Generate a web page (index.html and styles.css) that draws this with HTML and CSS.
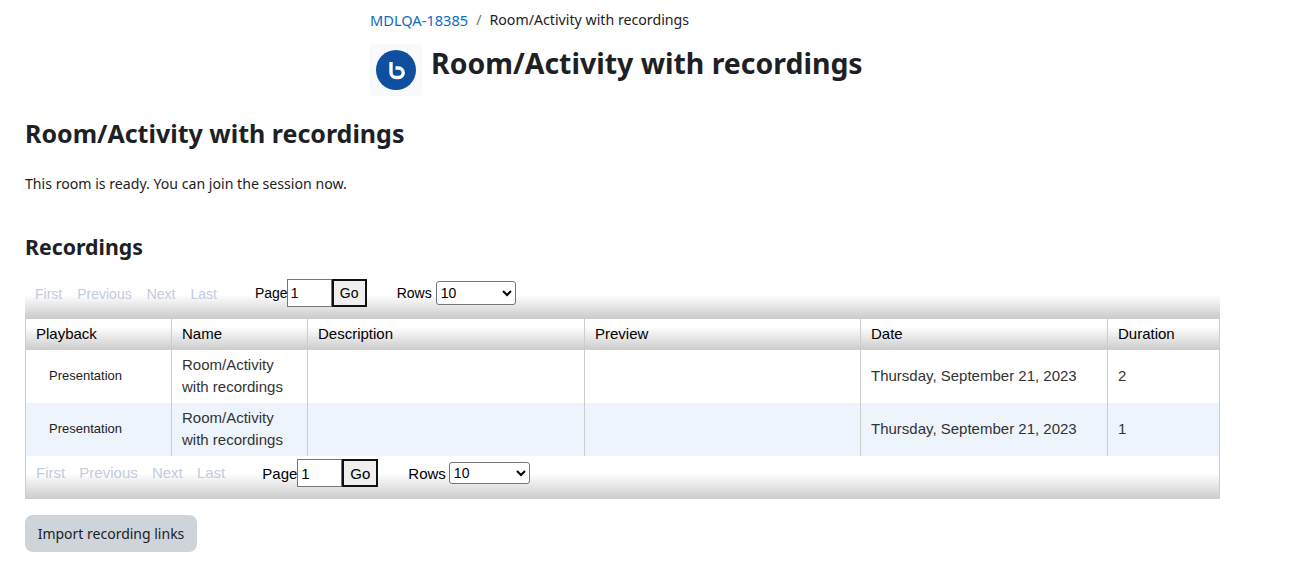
FILE: index.html
```
<!DOCTYPE html>
<html lang="en">
<head>
<meta charset="utf-8">
<title>Room/Activity with recordings</title>
<link rel="stylesheet" href="styles.css">
</head>
<body>
<header class="page-header">
  <nav class="crumbs"><a href="#">MDLQA-18385</a><span class="sep">/</span><span>Room/Activity with recordings</span></nav>
  <div class="title-row">
    <div class="icon-box">
      <svg width="40" height="40" viewBox="0 0 40 40"><circle cx="20" cy="20" r="20" fill="#0f4fa0"/><path d="M15 12V22.500A5 5 0 0 0 20 27.500H22.500A4.750 4.750 0 0 0 22.500 18H19.500" fill="none" stroke="#fff" stroke-width="3.400"/></svg>
    </div>
    <h1 class="page-title">Room/Activity with recordings</h1>
  </div>
</header>
<main class="content">
  <h2 class="room-title">Room/Activity with recordings</h2>
  <p class="status">This room is ready. You can join the session now.</p>
  <h3 class="rec-title">Recordings</h3>
  <div class="recordings">
    <div class="pager pager-top">
      <div class="pager-links"><span>First</span><span>Previous</span><span>Next</span><span>Last</span></div>
      <label class="pager-page">Page<input class="page-input" value="1"><button class="go" type="button">Go</button></label>
      <label class="pager-rows">Rows <select class="rows-select"><option>10</option></select></label>
    </div>
    <table class="rec-table">
      <colgroup><col class="c1"><col class="c2"><col class="c3"><col class="c4"><col class="c5"><col class="c6"></colgroup>
      <thead><tr><th>Playback</th><th>Name</th><th>Description</th><th>Preview</th><th>Date</th><th>Duration</th></tr></thead>
      <tbody>
        <tr><td><span class="playback">Presentation</span></td><td>Room/Activity with recordings</td><td></td><td></td><td>Thursday, September 21, 2023</td><td>2</td></tr>
        <tr class="alt"><td><span class="playback">Presentation</span></td><td>Room/Activity with recordings</td><td></td><td></td><td>Thursday, September 21, 2023</td><td>1</td></tr>
      </tbody>
    </table>
    <div class="pager pager-bottom">
      <div class="pager-links"><span>First</span><span>Previous</span><span>Next</span><span>Last</span></div>
      <label class="pager-page">Page<input class="page-input" value="1"><button class="go" type="button">Go</button></label>
      <label class="pager-rows">Rows <select class="rows-select"><option>10</option></select></label>
    </div>
  </div>
  <button class="import" type="button">Import recording links</button>
</main>
</body>
</html>
```
FILE: styles.css
```
* { box-sizing: border-box; }
body { margin: 0; background: #fff; color: #1d2125; font-family: "Noto Sans", "Open Sans", sans-serif; font-size: 14px; }
.page-header { padding: 10px 0 0 370px; }
.crumbs { display: flex; height: 20px; line-height: 20px; font-size: 14.200px; }
.crumbs a { color: #0f6cbf; text-decoration: none; font-size: 14.600px; }
.sep { margin: 0 8px; color: #6a737b; }
.title-row { display: flex; margin-top: 14px; }
.icon-box { width: 52px; height: 52px; background: #f8f9fa; border-radius: 4px; display: flex; align-items: center; justify-content: center; }
.page-title { margin: -1px 0 0 9px; font-size: 28.450px; line-height: 40px; font-weight: 700; }
.content { padding: 0 0 0 25px; }
.room-title { margin: 20px 0 0; font-size: 25px; line-height: 34px; font-weight: 700; }
.status { margin: 24px 0 0; font-size: 14.130px; line-height: 20px; }
.rec-title { margin: 38px 0 0; font-size: 21.300px; line-height: 30px; font-weight: 700; }
.recordings { width: 1195px; margin-top: 17px; font-family: "Liberation Sans", Arial, sans-serif; font-size: 14px; color: #000; }
.pager { display: flex; align-items: flex-start; background: linear-gradient(#fff 0, #fff 40%, #ccc 100%); }
.pager-top { height: 39px; padding: 0 0 0 10px; }
.pager-bottom { height: 43px; padding: 3px 0 0 10px; font-size: 15px; border: solid #ccc; border-width: 0 1px; }
.pager-links { display: flex; gap: 15px; color: #c3cbdc; line-height: 30px; }
.pager-bottom .pager-links { gap: 14.200px; line-height: 28px; }
.pager-page { display: flex; align-items: center; height: 28px; }
.pager-top .pager-page { margin-left: 38px; }
.pager-bottom .pager-page { margin-left: 37px; }
.page-input { width: 45px; height: 28px; margin-left: -1px; padding: 1px 2px 1px 3px; border: 1px solid #767676; font: inherit; background: #fff; }
.pager-bottom .page-input { margin-left: 0; }
.go { width: 35px; height: 28px; padding: 0; border: 2px solid #101010; background: #efefef; font: inherit; }
.pager-bottom .go { width: 36px; }
.pager-rows { display: flex; align-items: center; gap: 4px; height: 28px; margin-left: 30px; }
.rows-select { width: 80px; height: 24px; font: inherit; font-size: 14px; background: #fff; border: 1px solid #767676; border-radius: 3px; }
.pager-bottom .pager-rows { gap: 3px; }
.pager-bottom .rows-select { width: 81px; height: 22px; }
.rec-table { width: 1195px; border-collapse: separate; border-spacing: 0; table-layout: fixed; border: solid #ccc; border-width: 1px 1px 0; }
.c1 { width: 145px; } .c2 { width: 136px; } .c3 { width: 277px; } .c4 { width: 276px; } .c5 { width: 247px; } .c6 { width: 112px; }
.rec-table th { height: 31px; padding: 0 10px 2px; text-align: left; font-size: 15px; font-weight: 400; background: linear-gradient(#fff 0, #fff 25%, #ccc 100%); border-left: 1px solid #ccc; }
.rec-table td { height: 53px; padding: 0 10px 2px; font-size: 15px; line-height: 22px; border-left: 1px solid #ccc; color: #333; }
.rec-table th:first-child, .rec-table td:first-child { border-left: 0; }
.alt td { background: #edf4fc; }
.playback { display: block; padding-left: 13px; font-size: 13px; color: #222; }
.import { display: block; margin-top: 16px; width: 172px; height: 37px; padding: 0; border: 0; border-radius: 8px; background: #ced4da; color: #1d2125; font: inherit; font-size: 14px; }
```
